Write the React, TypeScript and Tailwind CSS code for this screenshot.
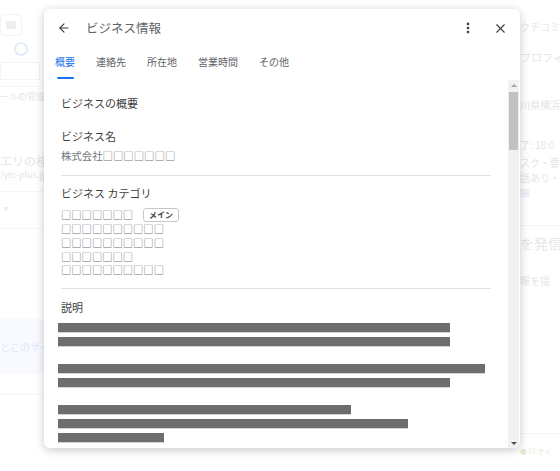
import { ArrowLeft, EllipsisVertical, X } from "lucide-react";

const tabs = ["概要", "連絡先", "所在地", "営業時間", "その他"];

const categories = [
  "□□□□□□□",
  "□□□□□□□□□□",
  "□□□□□□□□□□",
  "□□□□□□□",
  "□□□□□□□□□□",
];

// redacted description: widths of each grey bar, grouped by paragraph
const paragraphs = [[392, 392], [427, 392], [293, 350, 106]];

function Background() {
  return (
    <div className="flex h-full w-full justify-between text-[#e6e6e6]">
      <div className="flex w-[120px] flex-col">
        <div className="mt-[14px] flex h-[22px] w-[22px] items-center justify-center rounded-sm border border-[#f2f2f2]">
          <div className="h-[8px] w-[10px] bg-[#efefef]" />
        </div>
        <div className="mt-[6px] ml-[14px] h-[14px] w-[14px] rounded-full border-2 border-[#e3ebfb]" />
        <div className="mt-[6px] h-[18px] w-[40px] border border-[#f4f4f4]" />
        <div className="mt-[6px] h-px w-full bg-[#f6f6f6]" />
        <div className="mt-[4px] text-[9px] leading-[12px]">ールの管理</div>
        <div className="mt-[50px] text-[12px] leading-[16px]">エリの検索</div>
        <div className="text-[9px] leading-[12px]">/ytc-plus.jp</div>
        <div className="mt-[10px] h-px w-full bg-[#f6f6f6]" />
        <div className="mt-[10px] ml-[4px] text-[8px]">▾</div>
        <div className="mt-[14px] h-px w-full bg-[#f6f6f6]" />
        <div className="mt-[90px] flex h-[55px] items-center bg-[#f8faff] text-[10px] text-[#e0e8f8]">
          とこのサイ
        </div>
        <div className="mt-[20px] h-px w-full bg-[#f6f6f6]" />
      </div>
      <div className="flex w-[40px] flex-col overflow-hidden whitespace-nowrap text-[10px] leading-[14px]">
        <div className="mt-[20px] text-[#e6e9f0]">クチコミ</div>
        <div className="mt-[16px] text-[11px]">プロフィ</div>
        <div className="mt-[34px]">川県横浜</div>
        <div className="mt-[26px]">了: 18:0</div>
        <div className="mt-[4px]">スク・要</div>
        <div className="mt-[1px]">話あり・</div>
        <div className="mt-[1px] text-[#e2e8f6]">細</div>
        <div className="mt-[25px] h-px w-full bg-[#f4f4f4]" />
        <div className="mt-[8px] text-[14px] leading-[18px]">を発信</div>
        <div className="mt-[22px]">報を提</div>
        <div className="mt-[145px] h-px w-full bg-[#f4f4f4]" />
        <div className="mt-[10px] text-[7px] text-[#ece7d2]">● ECサイ</div>
      </div>
    </div>
  );
}

function Scrollbar() {
  return (
    <div className="mr-px flex w-[11px] flex-col items-center bg-[#f1f1f1]">
      <div className="mt-[4px] h-0 w-0 border-x-[3px] border-b-[3px] border-x-transparent border-b-[#a3a3a3]" />
      <div className="mt-[5px] h-[58px] w-[9px] bg-[#c1c1c1]" />
      <div className="flex-1" />
      <div className="mb-[3px] h-0 w-0 border-x-[3px] border-t-[3px] border-x-transparent border-t-[#505050]" />
    </div>
  );
}

export default function App() {
  return (
    <div className="relative h-[471px] w-[560px] overflow-hidden bg-white font-['Noto_Sans_CJK_JP','Noto_Sans',sans-serif]">
      <Background />

      <div className="absolute left-[44px] top-[9px] flex h-[439px] w-[476px] flex-col overflow-hidden rounded-md bg-white shadow-[0_2px_10px_rgba(0,0,0,0.22)]">
        {/* header */}
        <div className="flex h-[38px] shrink-0 items-center pl-[13px] pr-[12px]">
          <ArrowLeft size={14} strokeWidth={2} className="text-[#3c4043]" />
          <div className="ml-[15px] text-[12.5px] leading-[16px] text-[#5f6368]">ビジネス情報</div>
          <div className="flex-1" />
          <EllipsisVertical size={14} strokeWidth={2.6} className="text-[#3c4043]" />
          <X size={15} strokeWidth={1.8} className="ml-[18px] text-[#3c4043]" />
        </div>

        {/* tabs */}
        <div className="flex h-[33px] shrink-0 gap-[21px] pl-[11px]">
          {tabs.map((t, i) => (
            <div
              key={t}
              className={`relative flex h-full items-center pb-[3px] text-[10px] leading-[12px] ${
                i === 0 ? "text-[#1a73e8]" : "text-[#5f6368]"
              }`}
            >
              {t}
              {i === 0 && (
                <div className="absolute bottom-[1px] left-[2px] right-[1px] h-[2px] rounded-full bg-[#1a73e8]" />
              )}
            </div>
          ))}
        </div>

        {/* scroll area */}
        <div className="flex min-h-0 flex-1">
          <div className="flex-1 overflow-hidden px-[17px]">
            <div className="pt-[16px] text-[11px] leading-[14px] text-[#3c4043]">ビジネスの概要</div>

            <div className="mt-[19px] text-[11px] leading-[14px] text-[#3c4043]">ビジネス名</div>
            <div className="mt-[6px] text-[10.4px] leading-[14px] text-[#70757a]">株式会社□□□□□□□</div>
            <div className="mt-[12px] h-px bg-[#e0e0e0]" />

            <div className="mt-[10px] text-[11px] leading-[14px] text-[#3c4043]">ビジネス カテゴリ</div>
            <div className="mt-[8px] flex flex-col text-[10.3px] leading-[13.75px] text-[#70757a]">
              {categories.map((c, i) => (
                <div key={i} className="flex items-center">
                  <span>{c}</span>
                  {i === 0 && (
                    <span className="ml-[10px] rounded-[3px] border border-[#c8c8c8] px-[5px] text-[8px] font-bold leading-[12px] text-[#3c4043]">
                      メイン
                    </span>
                  )}
                </div>
              ))}
            </div>
            <div className="mt-[11px] h-px bg-[#e0e0e0]" />

            <div className="mt-[11px] text-[11px] leading-[14px] text-[#3c4043]">説明</div>
            <div className="ml-[-3px] mt-[9px] flex flex-col gap-[18px]">
              {paragraphs.map((p, pi) => (
                <div key={pi} className="flex flex-col gap-[5px]">
                  {p.map((w, i) => (
                    <div
                      key={i}
                      className="h-[9px] bg-[#6d6d6d] shadow-[0_1px_0_#d4d4d4]"
                      style={{ width: w }}
                    />
                  ))}
                </div>
              ))}
            </div>
          </div>
          <Scrollbar />
        </div>
      </div>
    </div>
  );
}
